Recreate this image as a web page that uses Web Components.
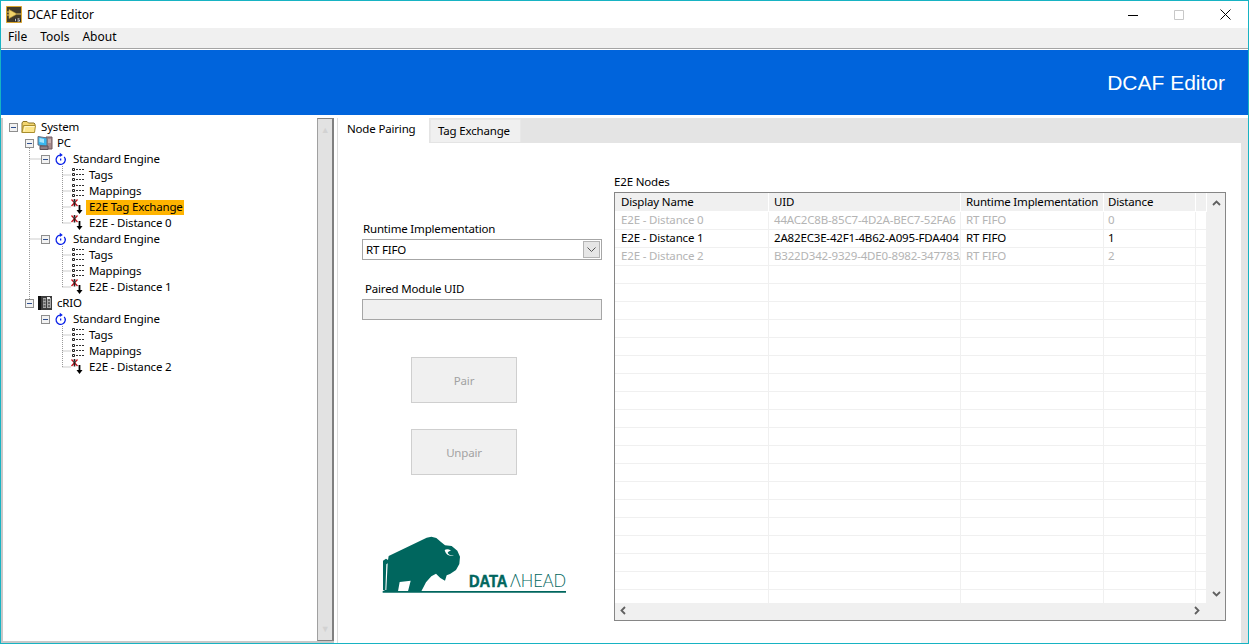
<!DOCTYPE html>
<html lang="en">
<head>
<meta charset="utf-8">
<title>DCAF Editor</title>
<style>
  html, body { margin: 0; height: 100%; background: #fff; overflow: hidden; }
  body { font: 11.5px/16px "Noto Sans", "Liberation Sans", sans-serif; letter-spacing: -0.17px; color: #000; }
</style>
</head>
<body>
<dcaf-app>
  <dcaf-titlebar slot="title">DCAF Editor</dcaf-titlebar>
  <dcaf-menubar slot="menu"><span>File</span><span>Tools</span><span>About</span></dcaf-menubar>
  <dcaf-banner slot="banner">DCAF Editor</dcaf-banner>
  <dcaf-tree slot="tree">
    <tree-row level="0" icon="folder" box>System</tree-row>
    <tree-row level="1" icon="pc" box>PC</tree-row>
    <tree-row level="2" icon="engine" box>Standard Engine</tree-row>
    <tree-row level="3" icon="tags">Tags</tree-row>
    <tree-row level="3" icon="tags">Mappings</tree-row>
    <tree-row level="3" icon="e2e" selected>E2E Tag Exchange</tree-row>
    <tree-row level="3" icon="e2e">E2E - Distance 0</tree-row>
    <tree-row level="2" icon="engine" box>Standard Engine</tree-row>
    <tree-row level="3" icon="tags">Tags</tree-row>
    <tree-row level="3" icon="tags">Mappings</tree-row>
    <tree-row level="3" icon="e2e">E2E - Distance 1</tree-row>
    <tree-row level="1" icon="crio" box>cRIO</tree-row>
    <tree-row level="2" icon="engine" box>Standard Engine</tree-row>
    <tree-row level="3" icon="tags">Tags</tree-row>
    <tree-row level="3" icon="tags">Mappings</tree-row>
    <tree-row level="3" icon="e2e">E2E - Distance 2</tree-row>
  </dcaf-tree>
  <dcaf-tabs slot="main" first="Node Pairing" second="Tag Exchange">
    <dcaf-pairing slot="left"></dcaf-pairing>
    <dcaf-nodes slot="right"></dcaf-nodes>
  </dcaf-tabs>
</dcaf-app>

<script>
const def = (name, css, html, init) => customElements.define(name, class extends HTMLElement {
  constructor() {
    super();
    this.attachShadow({ mode: "open" });
  }
  connectedCallback() {
    const body = typeof html === "function" ? html(this) : html;
    this.shadowRoot.innerHTML = `<style>${css}</style>${body}`;
    if (init) init(this);
  }
});

const icons = {
  folder: `<svg width="16" height="14" viewBox="0 0 16 14"><path d="M1 12.500V3l1-1.500h4L7.500 3H13l1 1v1" fill="#f3d56e" stroke="#8a7426"/><path d="M1 12.500 2.500 5.500h12l-1 7z" fill="#fbe58c" stroke="#a88d2c"/><path d="M3 11.500 4 6.500h9.500" fill="none" stroke="#fff6c8"/></svg>`,
  pc: `<svg width="16" height="16" viewBox="0 0 16 16"><path d="M9 2h6v12H9z" fill="#a58a8c" stroke="#6e5a60"/><path d="M1 1.500 10 3v8.500L1 10z" fill="#39b6ee" stroke="#6a6a78"/><path d="M2.500 3 7 4v4L2.500 7z" fill="#a6e4fb"/><path d="M3 11h8v3.500H3z" fill="#8f7f85" stroke="#5d5158"/><path d="M11 5h3M11 7h3" stroke="#e3d3cf"/></svg>`,
  crio: `<svg width="16" height="16" viewBox="0 0 16 16"><path d="M1 1h14v14H1z" fill="#3c3c3c"/><path d="M1 1h3v14H1z" fill="#111"/><path d="M6 3h3v10H6zM10 3h4v10h-4z" fill="#a9a9a9"/><path d="M6.500 5h2M6.500 8h2M6.500 11h2M11 5h2M11 8h2M11 11h2" stroke="#222"/><path d="M10 2h3v2h-3z" fill="#eee"/></svg>`,
  engine: `<svg width="16" height="14" viewBox="0 0 16 14"><path d="M7 3.200a4.600 4.600 0 1 0 4.200 1.600" fill="none" stroke="#0a22e8" stroke-width="1.300"/><path d="M6.800.800 9.800 3 6.800 5z" fill="#0a22e8"/><path d="M7 6.500h1.300v2H7z" fill="#0a22e8"/></svg>`,
  tags: `<svg width="16" height="16" viewBox="0 0 16 16"><g fill="#fff" stroke="#222"><path d="M3.500 1.500h2v2h-2zM3.500 6.500h2v2h-2zM3.500 11.500h2v2h-2z"/></g><path d="M7 2.500h9M7 7.500h9M7 12.500h9" stroke="#333" stroke-dasharray="2 1"/></svg>`,
  e2e: `<svg width="16" height="20" viewBox="0 0 16 20" style="overflow:visible"><path d="M2.500 2.500 8.500 9M8.500 2.500l-6 6.500" stroke="#c8101c" stroke-width="1.300"/><path d="M5.500 2v7.500" stroke="#222" stroke-width="1.600"/><path d="M4 4.500h3" stroke="#444"/><path d="M10.500 8v6" stroke="#000" stroke-width="1.800"/><path d="M7.500 13h6l-3 4z" fill="#000"/></svg>`
};

def("dcaf-app", `
  :host { display: block; box-sizing: border-box; width: 1249px; height: 644px; border: 1px solid #17b3c3; background: #fff; }
  #win { display: grid; grid-template-rows: 27px 20px 2px 65px 1fr; height: 100%; }
  #rule { background: linear-gradient(#a4a4a4 1px, #fff 1px); }
  #work { display: grid; grid-template-columns: 333px 1fr; min-height: 0; }
`, `
  <div id="win">
    <slot name="title"></slot>
    <slot name="menu"></slot>
    <div id="rule"></div>
    <slot name="banner"></slot>
    <div id="work">
      <slot name="tree"></slot>
      <slot name="main"></slot>
    </div>
  </div>
`);

def("dcaf-titlebar", `
  :host { display: flex; align-items: center; background: #fff; font-size: 12px; letter-spacing: 0; }
  #logo { margin-left: 5px; margin-right: 5px; display: flex; }
  #label { flex: 1; }
  #controls { display: flex; }
  #controls span { width: 46px; height: 27px; display: flex; align-items: center; justify-content: center; }
`, `
  <span id="logo"><svg width="16" height="17" viewBox="0 0 16 17">
    <path d="M.500.500h15v16H.500z" fill="#403a2a" stroke="#d9a52e"/>
    <path d="M3 3.500 11 8l-8 4.500z" fill="#f0d36a" stroke="#b89535" stroke-width=".6"/>
    <path d="M1 6h2M1 9h2M11 8h4" stroke="#e8c760"/>
    <path d="M8 12.500h7v3H8z" fill="#2b2b2b"/>
    <path d="M9.500 12.800v2.400M11.500 12.800h2M11.500 14h2v1.200h-2" stroke="#fff" stroke-width=".7" fill="none"/>
  </svg></span>
  <span id="label"><slot></slot></span>
  <span id="controls">
    <span><svg width="10" height="10" viewBox="0 0 10 10"><path d="M0 5.500h10" stroke="#000"/></svg></span>
    <span><svg width="10" height="10" viewBox="0 0 10 10"><path d="M.500.500h9v9h-9z" fill="none" stroke="#c8c8c8"/></svg></span>
    <span><svg width="11" height="11" viewBox="0 0 11 11"><path d="M.500.500l10 10M10.500.500l-10 10" stroke="#000"/></svg></span>
  </span>
`);

def("dcaf-menubar", `
  :host { display: flex; align-items: center; gap: 13px; padding: 0 0 2px 7px; background: #f0f0f0; font-size: 12px; letter-spacing: 0; }
`, `<slot></slot>`);

def("dcaf-banner", `
  :host { display: flex; align-items: center; justify-content: flex-end; padding: 0 23px 0 0; background: #0064dc; color: #fff;
          font: 21px/24px "Liberation Sans", Arial, sans-serif; letter-spacing: 0; }
`, `<slot></slot>`);

def("dcaf-tree", `
  :host { display: grid; grid-template-columns: 1fr 17px; position: relative; margin-top: 3px; border-left: 2px solid #c8c8c8; border-bottom: 2px solid #c8c8c8; background: #fff; }
  #list { padding-top: 1px; position: relative; min-width: 0; }
  #lines { position: absolute; left: -3px; top: -118px; pointer-events: none; }
  #bar { background: #e2e2e2; border: 1px solid #808080; border-right-width: 2px; border-left-color: #a0a0a0; display: flex; flex-direction: column; justify-content: space-between; align-items: center; padding: 6px 0; color: #d2d2d2; font-size: 9px; line-height: 10px; box-sizing: border-box; }
`, `
  <div id="list">
    <svg id="lines" width="100" height="380" viewBox="0 0 100 380">
      <g fill="none" stroke="#9a9a9a" stroke-dasharray="1 1">
        <path d="M29.500 148V303M29.500 159H41M29.500 239H41M45.500 319h-4"/>
        <path d="M62.500 166V223M62.500 175H71M62.500 191H71M62.500 207H71M62.500 223H71"/>
        <path d="M62.500 246V287M62.500 255H71M62.500 271H71M62.500 287H71"/>
        <path d="M62.500 326V367M62.500 335H71M62.500 351H71M62.500 367H71"/>
      </g>
    </svg>
    <slot></slot>
  </div>
  <div id="bar"><span>&#9650;</span><span>&#9660;</span></div>
`);

def("tree-row", `
  :host { display: flex; align-items: center; height: 16px; white-space: nowrap; position: relative; padding-left: calc(var(--level) * 16px + 6px); }
  #box { box-sizing: border-box; width: 9px; height: 9px; margin-right: 3px; border: 1px solid #8e8e8e; background: #f2f2f2; display: flex; align-items: center; justify-content: center; flex: none; }
  #box i { display: block; width: 5px; height: 1px; background: #2f4f8f; }
  #box.off { visibility: hidden; }
  #icon { width: 16px; height: 16px; margin-right: 4px; display: flex; align-items: center; justify-content: center; flex: none; }
  #text { align-self: flex-start; margin-top: 1px; line-height: 13px; padding-bottom: 2px; }
  :host([selected]) #text { background: #ffb400; margin-left: -3px; padding: 0 1px 2px 3px; }
`, (el) => `
  <span id="box" class="${el.hasAttribute("box") ? "" : "off"}"><i></i></span>
  <span id="icon">${icons[el.getAttribute("icon")]}</span>
  <span id="text"><slot></slot></span>
`, (el) => el.style.setProperty("--level", el.getAttribute("level")));

def("dcaf-tabs", `
  :host { display: grid; grid-template-rows: 25px 1fr; margin-top: 3px; margin-left: 3px; min-height: 0; border-left: 1px solid #dcdcdc; background: #fff; }
  #strip { display: flex; align-items: flex-end; background: #e4e4e4; }
  .tab { display: flex; align-items: center; box-sizing: border-box; }
  #t1 { width: 91px; height: 25px; padding: 0 0 3px 9px; background: #fff; }
  #t2 { width: 91px; height: 23px; padding: 0 0 0 7px; margin: 0 0 1px 1px; background: #f0f0f0; border: 1px solid #e8e8e8; border-bottom: 0; }
  #page { display: grid; grid-template-columns: 240px 612px; column-gap: 12px; padding-left: 24px; background: #fff; border-right: 7px solid #e4e4e4; min-height: 0; }
`, (el) => `
  <div id="strip">
    <div class="tab" id="t1">${el.getAttribute("first")}</div>
    <div class="tab" id="t2">${el.getAttribute("second")}</div>
  </div>
  <div id="page">
    <slot name="left"></slot>
    <slot name="right"></slot>
  </div>
`);

def("dcaf-pairing", `
  :host { display: flex; flex-direction: column; align-items: flex-start; padding-top: 78px; }
  label { display: block; line-height: 16px; }
  #rt { margin-left: 1px; }
  #uid { margin: 21px 0 2px 3px; }
  #select { box-sizing: border-box; width: 240px; height: 21px; margin-top: 2px; border: 1px solid #a6a6a6; display: flex; align-items: center; padding: 0 1px 0 3px; justify-content: space-between; }
  #arrow { box-sizing: border-box; width: 17px; height: 17px; border: 1px solid #b4b4b4; background: #e6e6e6; display: flex; align-items: center; justify-content: center; }
  #field { box-sizing: border-box; width: 240px; height: 21px; border: 1px solid #a6a6a6; background: #f0f0f0; }
  dcaf-button { margin-left: 49px; }
  #pair { margin-top: 37px; }
  #unpair { margin-top: 26px; }
  dcaf-logo { margin: 55px 0 0 8px; }
`, `
  <label id="rt">Runtime Implementation</label>
  <div id="select">RT FIFO<span id="arrow"><svg width="9" height="6" viewBox="0 0 9 6"><path d="M.500.500 4.500 4.500 8.500.500" fill="none" stroke="#555"/></svg></span></div>
  <label id="uid">Paired Module UID</label>
  <div id="field"></div>
  <dcaf-button id="pair">Pair</dcaf-button>
  <dcaf-button id="unpair">Unpair</dcaf-button>
  <dcaf-logo></dcaf-logo>
`);

def("dcaf-button", `
  :host { display: flex; align-items: center; justify-content: center; box-sizing: border-box; width: 106px; height: 46px; padding-top: 2px; background: #f0f0f0; border: 1px solid #cfcfcf; color: #a2a2a2; }
`, `<slot></slot>`);

def("dcaf-logo", `
  :host { display: block; width: 210px; height: 70px; }
  svg { display: block; }
`, `
  <svg width="210" height="70" viewBox="0 0 630 210">
    <path fill="#00665e" d="M39 180V92l9-6 6 4 2-12L170 23l14-3 15 4 14 12 12 10 20 2 17 14 8 18-2 22-10 18-18 12-10 4-5 16-14-8-13-13-14 8-16 18-14 27h-40l8-32-33 4-5 28H47z"/>
    <path fill="#fff" d="M49 180l4-80-4 3-3 77zM224 60c3 14 14 20 28 17-10-1-17-3-19-9 2-4 6-6 10-6-7-5-14-5-19-2z"/>
    <path fill="#00665e" d="M38 183h550v5H38z"/>
    <text x="297" y="170" font-family="Liberation Sans, Arial, sans-serif" font-weight="700" font-size="52" fill="#00665e" stroke="#00665e" stroke-width="1.500" textLength="115" lengthAdjust="spacingAndGlyphs">DATA</text>
    <text x="420" y="170" font-family="Lato, Open Sans, sans-serif" font-weight="300" font-size="52" fill="#00665e" textLength="168" lengthAdjust="spacingAndGlyphs">&#923;HEAD</text>
  </svg>
`);

const nodes = [
  ["E2E - Distance 0", "44AC2C8B-85C7-4D2A-BEC7-52FA6", "0", true],
  ["E2E - Distance 1", "2A82EC3E-42F1-4B62-A095-FDA404", "1", false],
  ["E2E - Distance 2", "B322D342-9329-4DE0-8982-347783A", "2", true]
];
def("dcaf-nodes", `
  :host { display: flex; flex-direction: column; padding-top: 31px; }
  label { line-height: 16px; margin-bottom: 2px; }
  #frame { box-sizing: border-box; width: 612px; height: 429px; border: 1px solid #868686; display: grid; grid-template-columns: 592px 18px; grid-template-rows: 410px 1fr; background: #f0f0f0; }
  #grid { background: #fff; overflow: hidden; }
  .row { display: grid; grid-template-columns: 154px 192px 143px 92px 11px; height: 18px; box-sizing: border-box; border-bottom: 1px solid #f0f0f0; }
  .row > div { box-sizing: border-box; padding-left: 5px; border-right: 1px solid #f0f0f0; white-space: nowrap; overflow: hidden; line-height: 15px; }
  .row > div:first-child { padding-left: 6px; }
  .row > div:nth-child(4) { padding-left: 4px; }
  .head { height: 19px; background: #f0f0f0; border-bottom: 1px solid #fff; }
  .head > div { border-right-color: #fff; line-height: 17px; }
  .dim { color: #b4b4b4; }
  #v { display: flex; flex-direction: column; justify-content: space-between; align-items: center; padding: 7px 0 6px; }
  #h { display: flex; justify-content: space-between; align-items: center; padding: 0 7px 2px 5px; }
  #corner { background: #f0f0f0; }
  svg { display: block; }
`, () => {
  const cells = (a) => a.map(t => `<div>${t}</div>`).join("");
  let rows = `<div class="row head">${cells(["Display Name", "UID", "Runtime Implementation", "Distance", ""])}</div>`;
  nodes.forEach((n) => {
    rows += `<div class="row${n[3] ? " dim" : ""}">${cells([n[0], n[1], "RT FIFO", n[2], ""])}</div>`;
  });
  for (let i = 0; i < 20; i++) rows += `<div class="row">${cells(["", "", "", "", ""])}</div>`;
  return `
    <label>E2E Nodes</label>
    <div id="frame">
      <div id="grid">${rows}</div>
      <div id="v">
        <svg width="9" height="6" viewBox="0 0 9 6"><path d="M1 5l3.500-3.500L8 5" fill="none" stroke="#606060" stroke-width="1.800"/></svg>
        <svg width="9" height="6" viewBox="0 0 9 6"><path d="M1 1l3.500 3.500L8 1" fill="none" stroke="#606060" stroke-width="1.800"/></svg>
      </div>
      <div id="h">
        <svg width="6" height="9" viewBox="0 0 6 9"><path d="M5 1 1.500 4.500 5 8" fill="none" stroke="#606060" stroke-width="1.800"/></svg>
        <svg width="6" height="9" viewBox="0 0 6 9"><path d="M1 1l3.500 3.500L1 8" fill="none" stroke="#606060" stroke-width="1.800"/></svg>
      </div>
      <div id="corner"></div>
    </div>`;
});
</script>
</body>
</html>
